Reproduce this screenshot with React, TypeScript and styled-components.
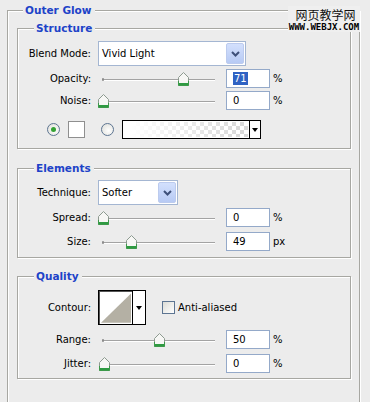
import React from 'react'
import styled, { createGlobalStyle, css } from 'styled-components'

const GlobalStyle = createGlobalStyle`
  html, body {
    margin: 0;
    padding: 0;
    background: #ececec;
  }
  body {
    font-family: 'DejaVu Sans', Verdana, sans-serif;
  }
`

const etched = css`
  position: relative;
  box-sizing: border-box;
  border: 1px solid #a7a7a2;
  box-shadow: inset 1px 1px 0 #fff, 1px 1px 0 #fff;
`

const Page = styled.div`
  position: relative;
  width: 370px;
  height: 402px;
  overflow: hidden;
  box-sizing: border-box;
  padding: 10px 0 0 7px;
  background: #ececec;
  font-size: 10px;
  color: #000;
`

const Panel = styled.div`
  ${etched}
  width: 353px;
  height: 420px;
  padding: 17px 0 0 9px;
`

const Group = styled.section<{ $mt: number; $pt: number; $pb: number }>`
  ${etched}
  width: 334px;
  margin-top: ${(p) => p.$mt}px;
  padding: ${(p) => p.$pt}px 0 ${(p) => p.$pb}px;
`

const Title = styled.div<{ $left: number }>`
  position: absolute;
  top: -7px;
  left: ${(p) => p.$left}px;
  padding: 0 3px 0 2px;
  background: #ececec;
  color: #1d43c8;
  font-weight: bold;
  font-size: 10.5px;
  line-height: 13px;
`

const Row = styled.div<{ $h: number; $mt?: number }>`
  display: grid;
  grid-template-columns: 80px 128px 44px auto;
  align-items: center;
  height: ${(p) => p.$h}px;
  margin-top: ${(p) => p.$mt ?? 0}px;
`

const Label = styled.span`
  text-align: right;
  padding-right: 7px;
  white-space: nowrap;
`

const Unit = styled.span`
  padding-left: 3px;
`

const SelectBox = styled.div<{ $w: number }>`
  grid-column: 2 / span 3;
  box-sizing: border-box;
  width: ${(p) => p.$w}px;
  height: 25px;
  border: 1px solid #a4b6d2;
  background: #fff;
  display: flex;
  align-items: center;
  justify-content: space-between;
  padding: 1px 1px 1px 3px;
`

const SelectButton = styled.div`
  box-sizing: border-box;
  width: 18px;
  height: 21px;
  border: 1px solid #bccbee;
  border-radius: 2px;
  background: linear-gradient(#d3e0fd, #b7caf4);
  display: flex;
  align-items: center;
  justify-content: center;
`

const Field = styled.div`
  box-sizing: border-box;
  width: 44px;
  height: 19px;
  border: 1px solid #94a9c9;
  background: #fff;
  padding-left: 6px;
  line-height: 17px;
`

const Selected = styled.span`
  background: #2f62c3;
  color: #fff;
  padding: 1px 1px;
`

const SliderBox = styled.div`
  position: relative;
  height: 100%;
`

const Track = styled.div`
  position: absolute;
  left: 5px;
  width: 112px;
  top: 50%;
  height: 1px;
  background: #a3a3a3;
  border-bottom: 1px solid #fff;
  &::before {
    content: '';
    position: absolute;
    left: -1px;
    top: -1px;
    width: 2px;
    height: 3px;
    background: #8c8c8c;
    border-radius: 1px;
  }
`

const Thumb = styled.svg`
  position: absolute;
  top: 3px;
`

const SwatchRow = styled.div<{ $mt: number }>`
  display: flex;
  align-items: center;
  height: 19px;
  margin-top: ${(p) => p.$mt}px;
  padding-left: 29px;
`

const Radio = styled.span<{ $on?: boolean }>`
  box-sizing: border-box;
  width: 13px;
  height: 13px;
  border-radius: 50%;
  border: 1px solid #5d7592;
  background: radial-gradient(circle at 60% 60%, #fff, #dcdcd6);
  display: flex;
  align-items: center;
  justify-content: center;
  margin-right: 8px;
  &::after {
    content: '';
    width: 5px;
    height: 5px;
    border-radius: 50%;
    background: ${(p) => (p.$on ? '#34a234' : 'transparent')};
  }
`

const ColorSwatch = styled.span`
  box-sizing: border-box;
  width: 17px;
  height: 17px;
  border: 1px solid #8f8f8f;
  background: #fff;
  margin-right: 16px;
`

const GradientBox = styled.div`
  box-sizing: border-box;
  width: 139px;
  height: 19px;
  border: 1px solid #000;
  display: flex;
  background: #fff;
`

const GradientFill = styled.div`
  flex: 1;
  margin: 1px;
  background-image: linear-gradient(to right, #fff 5%, rgba(255, 255, 255, 0) 95%),
    conic-gradient(#d9d9d9 25%, #fff 0 50%, #d9d9d9 0 75%, #fff 0);
  background-size: 100% 100%, 8px 8px;
`

const DropPart = styled.div<{ $w: number }>`
  width: ${(p) => p.$w}px;
  border-left: 1px solid #000;
  background: #fff;
  display: flex;
  align-items: center;
  justify-content: center;
`

const Caret = styled.span`
  width: 0;
  height: 0;
  border-left: 3px solid transparent;
  border-right: 3px solid transparent;
  border-top: 4px solid #000;
`

const QualityControls = styled.div`
  grid-column: 2 / span 3;
  display: flex;
  align-items: center;
`

const ContourBox = styled.div`
  box-sizing: border-box;
  width: 48px;
  height: 35px;
  border: 1px solid #000;
  box-shadow: inset 1px 1px 0 #555;
  display: flex;
  background: #fff;
  margin-right: 16px;
`

const ContourPreview = styled.svg`
  display: block;
  margin: 2px 1px 1px 2px;
`

const Checkbox = styled.span`
  box-sizing: border-box;
  width: 13px;
  height: 13px;
  border: 1px solid #5d7592;
  background: linear-gradient(135deg, #dcdcd6, #fff);
  margin-right: 3px;
`

const Watermark = styled.div`
  position: absolute;
  top: 6px;
  left: 288px;
  width: 72px;
  background: #efefef;
  text-align: center;
`

const WatermarkName = styled.div`
  font-family: 'Noto Sans CJK SC', sans-serif;
  font-size: 12px;
  line-height: 17px;
  color: #111;
  padding-left: 3px;
`

const WatermarkUrl = styled.div`
  font-family: 'DejaVu Sans Mono', monospace;
  font-weight: bold;
  font-size: 9px;
  line-height: 9px;
  color: #000;
`

const Chevron = () => (
  <svg width='9' height='6' viewBox='0 0 9 6'>
    <path d='M1 1 L4.5 4.5 L8 1' fill='none' stroke='#3e507a' strokeWidth='2' />
  </svg>
)

const Slider = ({ at }: { at: number }) => (
  <SliderBox>
    <Track />
    <Thumb width='11' height='14' viewBox='0 0 11 14' style={{ left: at - 5.5 }}>
      <path d='M0.5 5.5 L5.5 0.5 L10.5 5.5 V13.5 H0.5 Z' fill='#f7f7f5' stroke='#8d9a90' />
      <path d='M0.5 9 V13.5 H10.5 V9' fill='none' stroke='#3c9a4a' />
      <rect x='1' y='11' width='9' height='2' fill='#2f9a42' />
    </Thumb>
  </SliderBox>
)

const Select = ({ width, value }: { width: number; value: string }) => (
  <SelectBox $w={width}>
    <span>{value}</span>
    <SelectButton>
      <Chevron />
    </SelectButton>
  </SelectBox>
)

interface SliderRowProps {
  label: string
  at: number
  unit: string
  mt: number
  children: React.ReactNode
}

const SliderRow = ({ label, at, unit, mt, children }: SliderRowProps) => (
  <Row $h={19} $mt={mt}>
    <Label>{label}</Label>
    <Slider at={at} />
    <Field>{children}</Field>
    <Unit>{unit}</Unit>
  </Row>
)

export default function App() {
  return (
    <Page>
      <GlobalStyle />
      <Panel>
        <Title $left={15}>Outer Glow</Title>

        <Group $mt={0} $pt={12} $pb={9}>
          <Title $left={16}>Structure</Title>
          <Row $h={25}>
            <Label>Blend Mode:</Label>
            <Select width={148} value='Vivid Light' />
          </Row>
          <SliderRow label='Opacity:' at={85} unit='%' mt={3}>
            <Selected>71</Selected>
          </SliderRow>
          <SliderRow label='Noise:' at={5} unit='%' mt={3}>
            0
          </SliderRow>
          <SwatchRow $mt={10}>
            <Radio $on />
            <ColorSwatch />
            <Radio />
            <GradientBox>
              <GradientFill />
              <DropPart $w={10}>
                <Caret />
              </DropPart>
            </GradientBox>
          </SwatchRow>
        </Group>

        <Group $mt={19} $pt={11} $pb={6}>
          <Title $left={16}>Elements</Title>
          <Row $h={25}>
            <Label>Technique:</Label>
            <Select width={80} value='Softer' />
          </Row>
          <SliderRow label='Spread:' at={5} unit='%' mt={3}>
            0
          </SliderRow>
          <SliderRow label='Size:' at={33} unit='px' mt={5}>
            49
          </SliderRow>
        </Group>

        <Group $mt={18} $pt={13} $pb={5}>
          <Title $left={16}>Quality</Title>
          <Row $h={35}>
            <Label>Contour:</Label>
            <QualityControls>
              <ContourBox>
                <ContourPreview width='31' height='30' viewBox='0 0 31 30'>
                  <path d='M0 30 L31 0 V30 Z' fill='#b4b0a4' />
                </ContourPreview>
                <DropPart $w={12}>
                  <Caret />
                </DropPart>
              </ContourBox>
              <Checkbox />
              <span>Anti-aliased</span>
            </QualityControls>
          </Row>
          <SliderRow label='Range:' at={61} unit='%' mt={5}>
            50
          </SliderRow>
          <SliderRow label='Jitter:' at={6} unit='%' mt={5}>
            0
          </SliderRow>
        </Group>
      </Panel>

      <Watermark>
        <WatermarkName>网页教学网</WatermarkName>
        <WatermarkUrl>WWW.WEBJX.COM</WatermarkUrl>
      </Watermark>
    </Page>
  )
}
